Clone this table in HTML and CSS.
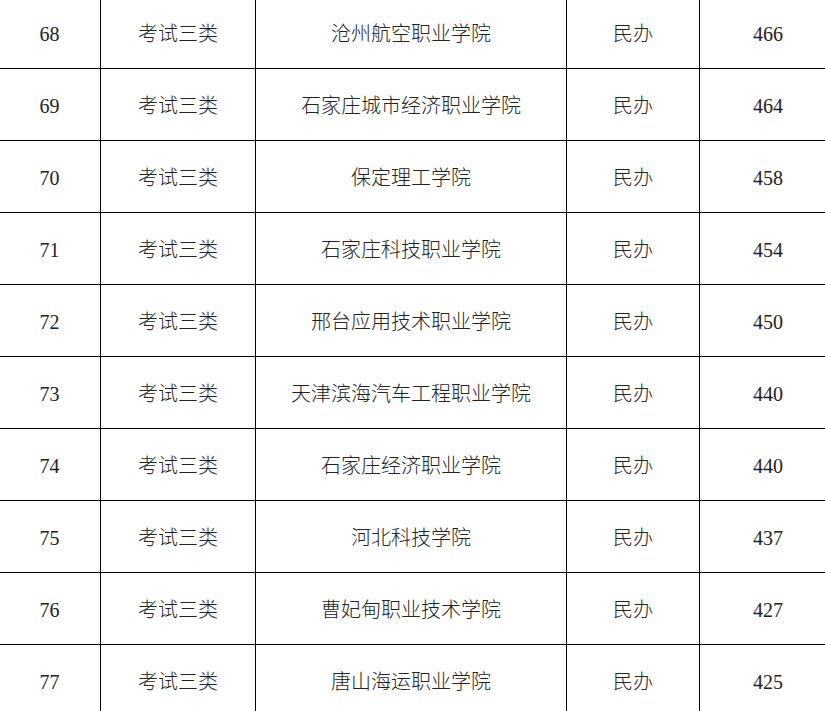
FILE: index.html
```html
<!DOCTYPE html>
<html lang="zh-CN">
<head>
<meta charset="utf-8">
<title>录取分数</title>
<link rel="stylesheet" href="styles.css">
</head>
<body>
<table class="score-table">
  <colgroup>
    <col class="c-no">
    <col class="c-type">
    <col class="c-school">
    <col class="c-kind">
    <col class="c-score">
  </colgroup>
  <tbody>
    <tr><td>68</td><td>考试三类</td><td>沧州航空职业学院</td><td>民办</td><td>466</td></tr>
    <tr><td>69</td><td>考试三类</td><td>石家庄城市经济职业学院</td><td>民办</td><td>464</td></tr>
    <tr><td>70</td><td>考试三类</td><td>保定理工学院</td><td>民办</td><td>458</td></tr>
    <tr><td>71</td><td>考试三类</td><td>石家庄科技职业学院</td><td>民办</td><td>454</td></tr>
    <tr><td>72</td><td>考试三类</td><td>邢台应用技术职业学院</td><td>民办</td><td>450</td></tr>
    <tr><td>73</td><td>考试三类</td><td>天津滨海汽车工程职业学院</td><td>民办</td><td>440</td></tr>
    <tr><td>74</td><td>考试三类</td><td>石家庄经济职业学院</td><td>民办</td><td>440</td></tr>
    <tr><td>75</td><td>考试三类</td><td>河北科技学院</td><td>民办</td><td>437</td></tr>
    <tr><td>76</td><td>考试三类</td><td>曹妃甸职业技术学院</td><td>民办</td><td>427</td></tr>
    <tr><td>77</td><td>考试三类</td><td>唐山海运职业学院</td><td>民办</td><td>425</td></tr>
  </tbody>
</table>
</body>
</html>
```
FILE: styles.css
```css
html, body {
  margin: 0;
  padding: 0;
  background: #fff;
  overflow: hidden;
}

.score-table {
  border-collapse: collapse;
  table-layout: fixed;
  width: 838px;
  margin: -4px 0 0 -2px;
  font-family: "Liberation Serif", "Noto Sans CJK SC", serif;
  font-size: 20px;
  font-weight: 300;
  color: #222;
}

.c-no { width: 102px; }
.c-type { width: 155px; }
.c-school { width: 311px; }
.c-kind { width: 133px; }
.c-score { width: 137px; }

.score-table td {
  height: 71px;
  padding: 2px 0 0;
  border: 1px solid #000;
  text-align: center;
  vertical-align: middle;
  line-height: 24px;
  box-sizing: border-box;
}

.score-table tr {
  height: 72px;
}
```
